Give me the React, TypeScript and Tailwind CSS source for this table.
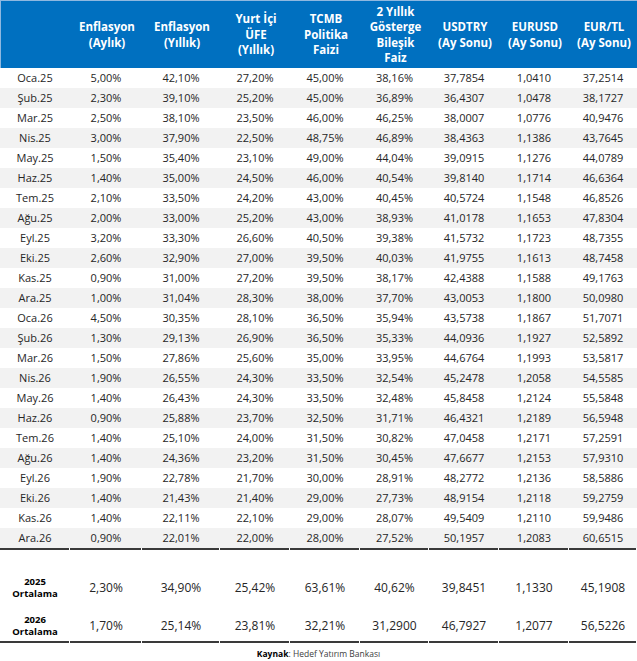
import React from "react";

const rows: string[][] = [
  ["Oca.25", "5,00%", "42,10%", "27,20%", "45,00%", "38,16%", "37,7854", "1,0410", "37,2514"],
  ["Şub.25", "2,30%", "39,10%", "25,20%", "45,00%", "36,89%", "36,4307", "1,0478", "38,1727"],
  ["Mar.25", "2,50%", "38,10%", "23,50%", "46,00%", "46,25%", "38,0007", "1,0776", "40,9476"],
  ["Nis.25", "3,00%", "37,90%", "22,50%", "48,75%", "46,89%", "38,4363", "1,1386", "43,7645"],
  ["May.25", "1,50%", "35,40%", "23,10%", "49,00%", "44,04%", "39,0915", "1,1276", "44,0789"],
  ["Haz.25", "1,40%", "35,00%", "24,50%", "46,00%", "40,54%", "39,8140", "1,1714", "46,6364"],
  ["Tem.25", "2,10%", "33,50%", "24,20%", "43,00%", "40,45%", "40,5724", "1,1548", "46,8526"],
  ["Ağu.25", "2,00%", "33,00%", "25,20%", "43,00%", "38,93%", "41,0178", "1,1653", "47,8304"],
  ["Eyl.25", "3,20%", "33,30%", "26,60%", "40,50%", "39,38%", "41,5732", "1,1723", "48,7355"],
  ["Eki.25", "2,60%", "32,90%", "27,00%", "39,50%", "40,03%", "41,9755", "1,1613", "48,7458"],
  ["Kas.25", "0,90%", "31,00%", "27,20%", "39,50%", "38,17%", "42,4388", "1,1588", "49,1763"],
  ["Ara.25", "1,00%", "31,04%", "28,30%", "38,00%", "37,70%", "43,0053", "1,1800", "50,0980"],
  ["Oca.26", "4,50%", "30,35%", "28,10%", "36,50%", "35,94%", "43,5738", "1,1867", "51,7071"],
  ["Şub.26", "1,30%", "29,13%", "26,90%", "36,50%", "35,33%", "44,0936", "1,1927", "52,5892"],
  ["Mar.26", "1,50%", "27,86%", "25,60%", "35,00%", "33,95%", "44,6764", "1,1993", "53,5817"],
  ["Nis.26", "1,90%", "26,55%", "24,30%", "33,50%", "32,54%", "45,2478", "1,2058", "54,5585"],
  ["May.26", "1,40%", "26,43%", "24,30%", "33,50%", "32,48%", "45,8458", "1,2124", "55,5848"],
  ["Haz.26", "0,90%", "25,88%", "23,70%", "32,50%", "31,71%", "46,4321", "1,2189", "56,5948"],
  ["Tem.26", "1,40%", "25,10%", "24,00%", "31,50%", "30,82%", "47,0458", "1,2171", "57,2591"],
  ["Ağu.26", "1,40%", "24,36%", "23,20%", "31,50%", "30,45%", "47,6677", "1,2153", "57,9310"],
  ["Eyl.26", "1,90%", "22,78%", "21,70%", "30,00%", "28,91%", "48,2772", "1,2136", "58,5886"],
  ["Eki.26", "1,40%", "21,43%", "21,40%", "29,00%", "27,73%", "48,9154", "1,2118", "59,2759"],
  ["Kas.26", "1,40%", "22,11%", "22,10%", "29,00%", "28,07%", "49,5409", "1,2110", "59,9486"],
  ["Ara.26", "0,90%", "22,01%", "22,00%", "28,00%", "27,52%", "50,1957", "1,2083", "60,6515"],
];

const summary: { y: string; v: string[] }[] = [
  { y: "2025", v: ["2,30%", "34,90%", "25,42%", "63,61%", "40,62%", "39,8451", "1,1330", "45,1908"] },
  { y: "2026", v: ["1,70%", "25,14%", "23,81%", "32,21%", "31,2900", "46,7927", "1,2077", "56,5226"] },
];

const headers: React.ReactNode[] = [
  "",
  <>Enflasyon<br />(Aylık)</>,
  <>Enflasyon<br />(Yıllık)</>,
  <>Yurt İçi<br />ÜFE<br />(Yıllık)</>,
  <>TCMB<br />Politika<br />Faizi</>,
  <>2 Yıllık<br />Gösterge<br />Bileşik<br />Faiz</>,
  <>USDTRY<br />(Ay Sonu)</>,
  <>EURUSD<br />(Ay Sonu)</>,
  <>EUR/TL<br />(Ay Sonu)</>,
];

const grid = "grid grid-cols-[70px_72px_78px_70px_70px_69px_70px_70px_68px]";

function Rule() {
  return (
    <div className={grid}>
      {Array.from({ length: 9 }).map((_, i) => (
        <div key={i} className="h-[2px] bg-[#3a3a3a] mr-px" />
      ))}
    </div>
  );
}

export default function App() {
  return (
    <div
      className="w-[637px] h-[661px] bg-white text-[#262626]"
      style={{ fontFamily: '"Open Sans", "DejaVu Sans", sans-serif' }}
    >
      <div className={`${grid} h-[68px] bg-[#0070c0] border-t border-l border-[#8fb8e0] text-white font-bold text-[11.5px] leading-[15.5px]`}>
        {headers.map((h, i) => (
          <div key={i} className="flex items-center justify-center text-center">
            <div>{h}</div>
          </div>
        ))}
      </div>
      {rows.map((r, ri) => (
        <div
          key={ri}
          className={`${grid} h-[20px] text-[11px] ${ri % 2 === 1 ? "bg-[#f2f2f2]" : "bg-white"}`}
        >
          {r.map((c, ci) => (
            <div key={ci} className="flex items-center justify-center">
              {c}
            </div>
          ))}
        </div>
      ))}
      <Rule />
      <div className="h-[19px]" />
      {summary.map((s, si) => (
        <div
          key={si}
          className={`${grid} ${si === 0 ? "h-[38px]" : "h-[34px] pt-[4px]"} items-center`}
        >
          <div className="flex flex-col items-center justify-center text-[9.5px] leading-[12px] font-bold text-black">
            <span>{s.y}</span>
            <span>Ortalama</span>
          </div>
          {s.v.map((v, vi) => (
            <div key={vi} className="flex items-center justify-center text-[12px]">
              {v}
            </div>
          ))}
        </div>
      ))}
      <Rule />
      <div className="mt-[5px] text-center text-[8.5px] text-[#404040]">
        <span className="font-bold text-black">Kaynak</span>: Hedef Yatırım Bankası
      </div>
    </div>
  );
}
